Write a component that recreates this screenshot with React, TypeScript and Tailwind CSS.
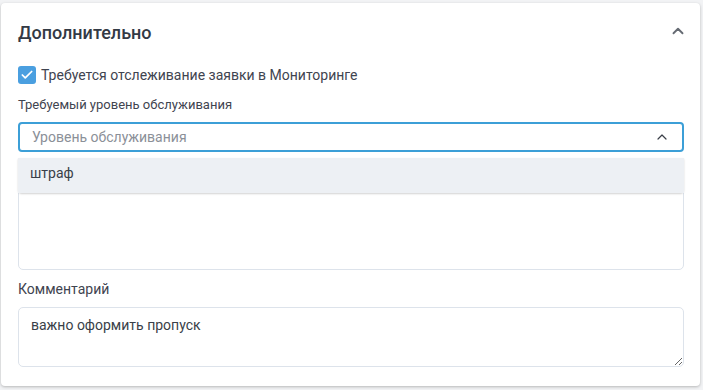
import { Check, ChevronUp } from "lucide-react";

const font = { fontFamily: "Roboto, 'Noto Sans', sans-serif" };

export default function App() {
  return (
    <div className="h-[390px] w-[703px] bg-[#f2f3f5] pl-[1px] pr-[3px] pt-[3px]" style={font}>
      <div className="flex h-[383px] flex-col rounded-[4px] bg-white pl-[17px] pr-[16px] pt-[17px] shadow-[0_1px_3px_rgba(0,0,0,0.25)]">
        <div className="flex h-[24px] items-center justify-between">
          <h2 className="text-[18px] font-medium text-[#333a45]">Дополнительно</h2>
          <ChevronUp className="mr-[-3px] mt-[-3px] h-[18px] w-[18px] text-[#666b73]" strokeWidth={2.5} />
        </div>

        <label className="mt-[22px] flex h-[18px] items-center gap-[5px]">
          <span className="flex h-[18px] w-[18px] items-center justify-center rounded-[3px] bg-[#4a9fe0]">
            <Check className="h-[14px] w-[14px] text-white" strokeWidth={3} />
          </span>
          <span className="text-[14px] text-[#3f4450]">Требуется отслеживание заявки в Мониторинге</span>
        </label>

        <div className="mt-[12px] h-[18px] text-[13px] leading-[18px] text-[#3f4450]">
          Требуемый уровень обслуживания
        </div>

        <div className="relative mt-[8px]">
          <div className="flex h-[30px] items-center justify-between rounded-[4px] border-2 border-[#3c9fd7] pl-[12px] pr-[12px]">
            <span className="text-[14px] text-[#8b9098]">Уровень обслуживания</span>
            <ChevronUp className="h-[16px] w-[16px] text-[#3a3f48]" strokeWidth={1.8} />
          </div>

          <div className="mt-[8px] h-[110px] rounded-[5px] border border-[#dde3eb]" />

          <div className="absolute left-0 right-0 top-[36px] rounded-b-[4px] bg-white shadow-[0_1px_2px_rgba(0,0,0,0.18)]">
            <div className="flex h-[35px] items-center bg-[#edf0f4] pb-[4px] pl-[12px] text-[14px] text-[#3a3f48]">
              штраф
            </div>
          </div>
        </div>

        <div className="mt-[10px] h-[18px] text-[14px] leading-[18px] text-[#3f4450]">Комментарий</div>

        <textarea
          className="mt-[9px] h-[60px] w-full resize-y rounded-[5px] border border-[#dde3eb] px-[12px] py-[7px] text-[14px] text-[#3a3f48] outline-none"
          defaultValue="важно оформить пропуск"
        />
      </div>
    </div>
  );
}
